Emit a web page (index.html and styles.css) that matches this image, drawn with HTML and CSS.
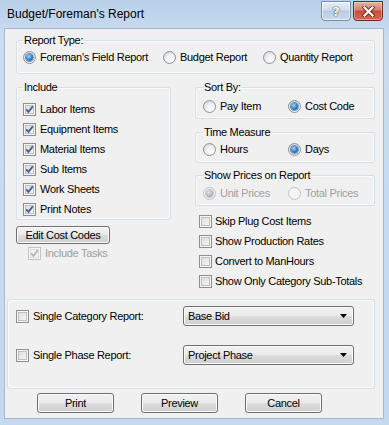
FILE: index.html
```html
<!DOCTYPE html>
<html lang="en">
<head>
    <meta charset="UTF-8">
    <meta name="viewport" content="width=device-width, initial-scale=1.0">
    <title>Budget/Foreman's Report</title>
    <link rel="stylesheet" href="styles.css">
</head>
<body>
    <div class="window">
        <div class="titlebar">
            <span class="title">Budget/Foreman's Report</span>
            <div class="caption-buttons">
                <span class="cap-btn help">?</span>
                <span class="cap-btn close">
                    <svg width="13" height="11" viewBox="0 0 13 11">
                        <path d="M2.5 1.5 L10.5 9.5 M10.5 1.5 L2.5 9.5" stroke="#6b2820" stroke-width="4" stroke-linecap="square"/>
                        <path d="M2.5 1.5 L10.5 9.5 M10.5 1.5 L2.5 9.5" stroke="#fff" stroke-width="2.2" stroke-linecap="square"/>
                    </svg>
                </span>
            </div>
        </div>

        <div class="client">
            <fieldset class="group report-type">
                <legend>Report Type:</legend>
                <div class="opts">
                    <label class="opt w140"><span class="radio checked"></span>Foreman's Field Report</label>
                    <label class="opt w100"><span class="radio"></span>Budget Report</label>
                    <label class="opt"><span class="radio"></span>Quantity Report</label>
                </div>
            </fieldset>

            <div class="columns">
                <div class="left-col">
                    <fieldset class="group include">
                        <legend>Include</legend>
                        <label class="chk-row"><span class="check on"><svg viewBox="0 0 11 11"><path d="M2.2 5.4 L4.4 7.8 L8.8 2.4"/></svg></span>Labor Items</label>
                        <label class="chk-row"><span class="check on"><svg viewBox="0 0 11 11"><path d="M2.2 5.4 L4.4 7.8 L8.8 2.4"/></svg></span>Equipment Items</label>
                        <label class="chk-row"><span class="check on"><svg viewBox="0 0 11 11"><path d="M2.2 5.4 L4.4 7.8 L8.8 2.4"/></svg></span>Material Items</label>
                        <label class="chk-row"><span class="check on"><svg viewBox="0 0 11 11"><path d="M2.2 5.4 L4.4 7.8 L8.8 2.4"/></svg></span>Sub Items</label>
                        <label class="chk-row"><span class="check on"><svg viewBox="0 0 11 11"><path d="M2.2 5.4 L4.4 7.8 L8.8 2.4"/></svg></span>Work Sheets</label>
                        <label class="chk-row"><span class="check on"><svg viewBox="0 0 11 11"><path d="M2.2 5.4 L4.4 7.8 L8.8 2.4"/></svg></span>Print Notes</label>
                    </fieldset>
                    <button class="btn edit-codes">Edit Cost Codes</button>
                    <label class="opt include-tasks disabled"><span class="check on"><svg viewBox="0 0 11 11"><path d="M2.2 5.4 L4.4 7.8 L8.8 2.4"/></svg></span>Include Tasks</label>
                </div>

                <div class="right-col">
                    <fieldset class="group sort-by">
                        <legend>Sort By:</legend>
                        <div class="opts">
                            <label class="opt w85"><span class="radio"></span>Pay Item</label>
                            <label class="opt"><span class="radio checked"></span>Cost Code</label>
                        </div>
                    </fieldset>
                    <fieldset class="group time-measure">
                        <legend>Time Measure</legend>
                        <div class="opts">
                            <label class="opt w85"><span class="radio"></span>Hours</label>
                            <label class="opt"><span class="radio checked"></span>Days</label>
                        </div>
                    </fieldset>
                    <fieldset class="group show-prices">
                        <legend>Show Prices on Report</legend>
                        <div class="opts disabled">
                            <label class="opt w85"><span class="radio checked"></span>Unit Prices</label>
                            <label class="opt"><span class="radio"></span>Total Prices</label>
                        </div>
                    </fieldset>
                    <div class="options">
                        <label class="chk-row"><span class="check"></span>Skip Plug Cost Items</label>
                        <label class="chk-row"><span class="check"></span>Show Production Rates</label>
                        <label class="chk-row"><span class="check"></span>Convert to ManHours</label>
                        <label class="chk-row"><span class="check"></span>Show Only Category Sub-Totals</label>
                    </div>
                </div>
            </div>

            <fieldset class="group single">
                <div class="single-row">
                    <label class="opt single-label"><span class="check"></span>Single Category Report:</label>
                    <div class="combo"><span>Base Bid</span><svg width="7" height="4" viewBox="0 0 7 4"><path d="M0 0 H7 L3.5 4 Z" fill="#000"/></svg></div>
                </div>
                <div class="single-row">
                    <label class="opt single-label"><span class="check"></span>Single Phase Report:</label>
                    <div class="combo"><span>Project Phase</span><svg width="7" height="4" viewBox="0 0 7 4"><path d="M0 0 H7 L3.5 4 Z" fill="#000"/></svg></div>
                </div>
            </fieldset>

            <div class="actions">
                <button class="btn action">Print</button>
                <button class="btn action">Preview</button>
                <button class="btn action">Cancel</button>
            </div>
        </div>
    </div>
</body>
</html>
```

FILE: styles.css
```css
* {
    margin: 0;
    padding: 0;
    box-sizing: border-box;
}

body {
    font-family: "Liberation Sans", Arial, sans-serif;
    font-size: 11px;
    color: #000;
    background-color: #fff;
}

.window {
    width: 389px;
    height: 425px;
    display: flex;
    flex-direction: column;
    padding: 0 5px 6px 4px;
    background: linear-gradient(#b9d0ea, #cbdcf0 40px, #c4d8ee);
}

/* title bar */
.titlebar {
    height: 28px;
    display: flex;
    justify-content: space-between;
    align-items: flex-start;
    padding: 0 1px 0 3px;
}

.title {
    font-size: 12px;
    line-height: 28px;
    color: #000;
}

.caption-buttons {
    display: flex;
    gap: 2px;
    margin-top: 1px;
}

.cap-btn {
    width: 30px;
    height: 20px;
    display: flex;
    align-items: center;
    justify-content: center;
    border-radius: 0 0 4px 4px;
}

.help {
    border: 1px solid #7b8ea6;
    background: linear-gradient(#e6eef8, #d0ddec 45%, #b9cbe0 50%, #cbdbee);
    box-shadow: inset 0 0 0 1px rgba(255, 255, 255, 0.6);
    color: #fff;
    font-family: "DejaVu Sans", sans-serif;
    font-size: 13px;
    font-weight: bold;
    text-shadow: 0 0 1px #3d4e66, 0 0 1px #3d4e66, 0 0 1px #3d4e66;
}

.close {
    border: 1px solid #6e2b23;
    background: linear-gradient(#eab0a3, #d8806f 45%, #c54a36 50%, #d56d57);
    box-shadow: inset 0 0 0 1px rgba(255, 255, 255, 0.35);
}

/* client area */
.client {
    flex: 1;
    background-color: #f0f0f0;
    border: 1px solid #a6b9d0;
    letter-spacing: -0.3px;
}

.group {
    border: 1px solid #d5dfe5;
    border-radius: 3px;
    box-shadow: inset 0 0 0 1px #fafafa;
    padding-left: 6px;
}

.group legend {
    line-height: 13px;
    padding: 0 1px;
}

.opts {
    display: flex;
}

.opt {
    display: flex;
    align-items: center;
    gap: 4px;
    height: 13px;
    line-height: 13px;
    white-space: nowrap;
}

.w140 { width: 140px; }
.w100 { width: 100px; }
.w85 { width: 85px; }

.disabled {
    color: #a0a0a0;
}

.report-type {
    margin: 5px 0 0 11px;
    width: 359px;
    padding-top: 4px;
    padding-bottom: 9px;
}

/* radios and checkboxes */
.radio {
    width: 13px;
    height: 13px;
    flex-shrink: 0;
    border-radius: 50%;
    border: 1px solid #8d9296;
    background: radial-gradient(circle at 65% 70%, #ffffff 0%, #eef0f2 45%, #c9cdd2 100%);
    display: flex;
    align-items: center;
    justify-content: center;
}

.radio.checked::after {
    content: "";
    width: 7px;
    height: 7px;
    border-radius: 50%;
    background: radial-gradient(circle at 40% 35%, #a9d8fb 0%, #3d8ad3 45%, #1a4a86 100%);
    box-shadow: 0 0 0 1px #6d8fb8;
}

.disabled .radio {
    border-color: #c0c3c6;
    background: #f4f4f4;
}

.disabled .radio.checked::after {
    background: radial-gradient(circle at 40% 35%, #e4e4e4 0%, #b7b7b7 55%, #9c9c9c 100%);
    box-shadow: 0 0 0 1px #c4c4c4;
}

.check {
    width: 13px;
    height: 13px;
    flex-shrink: 0;
    border: 1px solid #8e8f8f;
    background: linear-gradient(135deg, #d6d8db, #fbfbfb);
    box-shadow: inset 0 0 0 1px #f5f5f5, inset 0 0 0 2px #bcc1c6;
}

.check svg {
    display: block;
    width: 11px;
    height: 11px;
}

.check path {
    fill: none;
    stroke: #4a5d93;
    stroke-width: 1.9;
}

.disabled .check {
    border-color: #c5c5c5;
    background: #f4f4f4;
    box-shadow: inset 0 0 0 1px #f7f7f7, inset 0 0 0 2px #dcdcdc;
}

.disabled .check path {
    stroke: #b4b4b4;
}

.chk-row {
    display: flex;
    align-items: center;
    gap: 4px;
    height: 20px;
    white-space: nowrap;
}

/* middle columns */
.columns {
    display: flex;
    gap: 24px;
    margin-left: 11px;
}

.left-col {
    width: 155px;
}

.include {
    margin-top: 7px;
    padding-top: 5px;
}

.edit-codes {
    width: 94px;
    height: 18px;
    margin-top: 6px;
}

.include-tasks {
    margin: 3px 0 0 12px;
}

.right-col {
    width: 180px;
}

.right-col .group {
    padding-left: 7px;
}

.sort-by {
    margin-top: 7px;
    padding-top: 6px;
    padding-bottom: 5px;
}

.time-measure {
    margin-top: 7px;
    padding-top: 4px;
    padding-bottom: 6px;
}

.show-prices {
    margin-top: 6px;
    padding-top: 5px;
    padding-bottom: 5px;
}

.options {
    margin: 5px 0 0 4px;
}

.options .chk-row {
    gap: 3px;
}

/* single category / phase */
.single {
    margin: 8px 0 0 2px;
    width: 368px;
    height: 90px;
    padding: 6px 0 0 8px;
    display: flex;
    flex-direction: column;
    gap: 19px;
}

.single-row {
    display: flex;
    align-items: center;
    height: 20px;
}

.single-label {
    width: 167px;
}

.combo {
    width: 171px;
    height: 20px;
    display: flex;
    align-items: center;
    justify-content: space-between;
    padding: 0 6px 0 4px;
    border: 1px solid #707070;
    border-radius: 3px;
    background: linear-gradient(#f2f2f2, #ebebeb 50%, #dddddd 50%, #cfcfcf);
    box-shadow: inset 0 0 0 1px #fbfbfb;
}

/* buttons */
.btn {
    font: inherit;
    letter-spacing: inherit;
    color: #000;
    border: 1px solid #707070;
    border-radius: 3px;
    background: linear-gradient(#f2f2f2, #ebebeb 50%, #dddddd 50%, #cfcfcf);
    box-shadow: inset 0 0 0 1px #fbfbfb;
    display: block;
}

.actions {
    display: flex;
    gap: 27px;
    margin: 4px 0 0 32px;
}

.action {
    width: 77px;
    height: 20px;
}
```
